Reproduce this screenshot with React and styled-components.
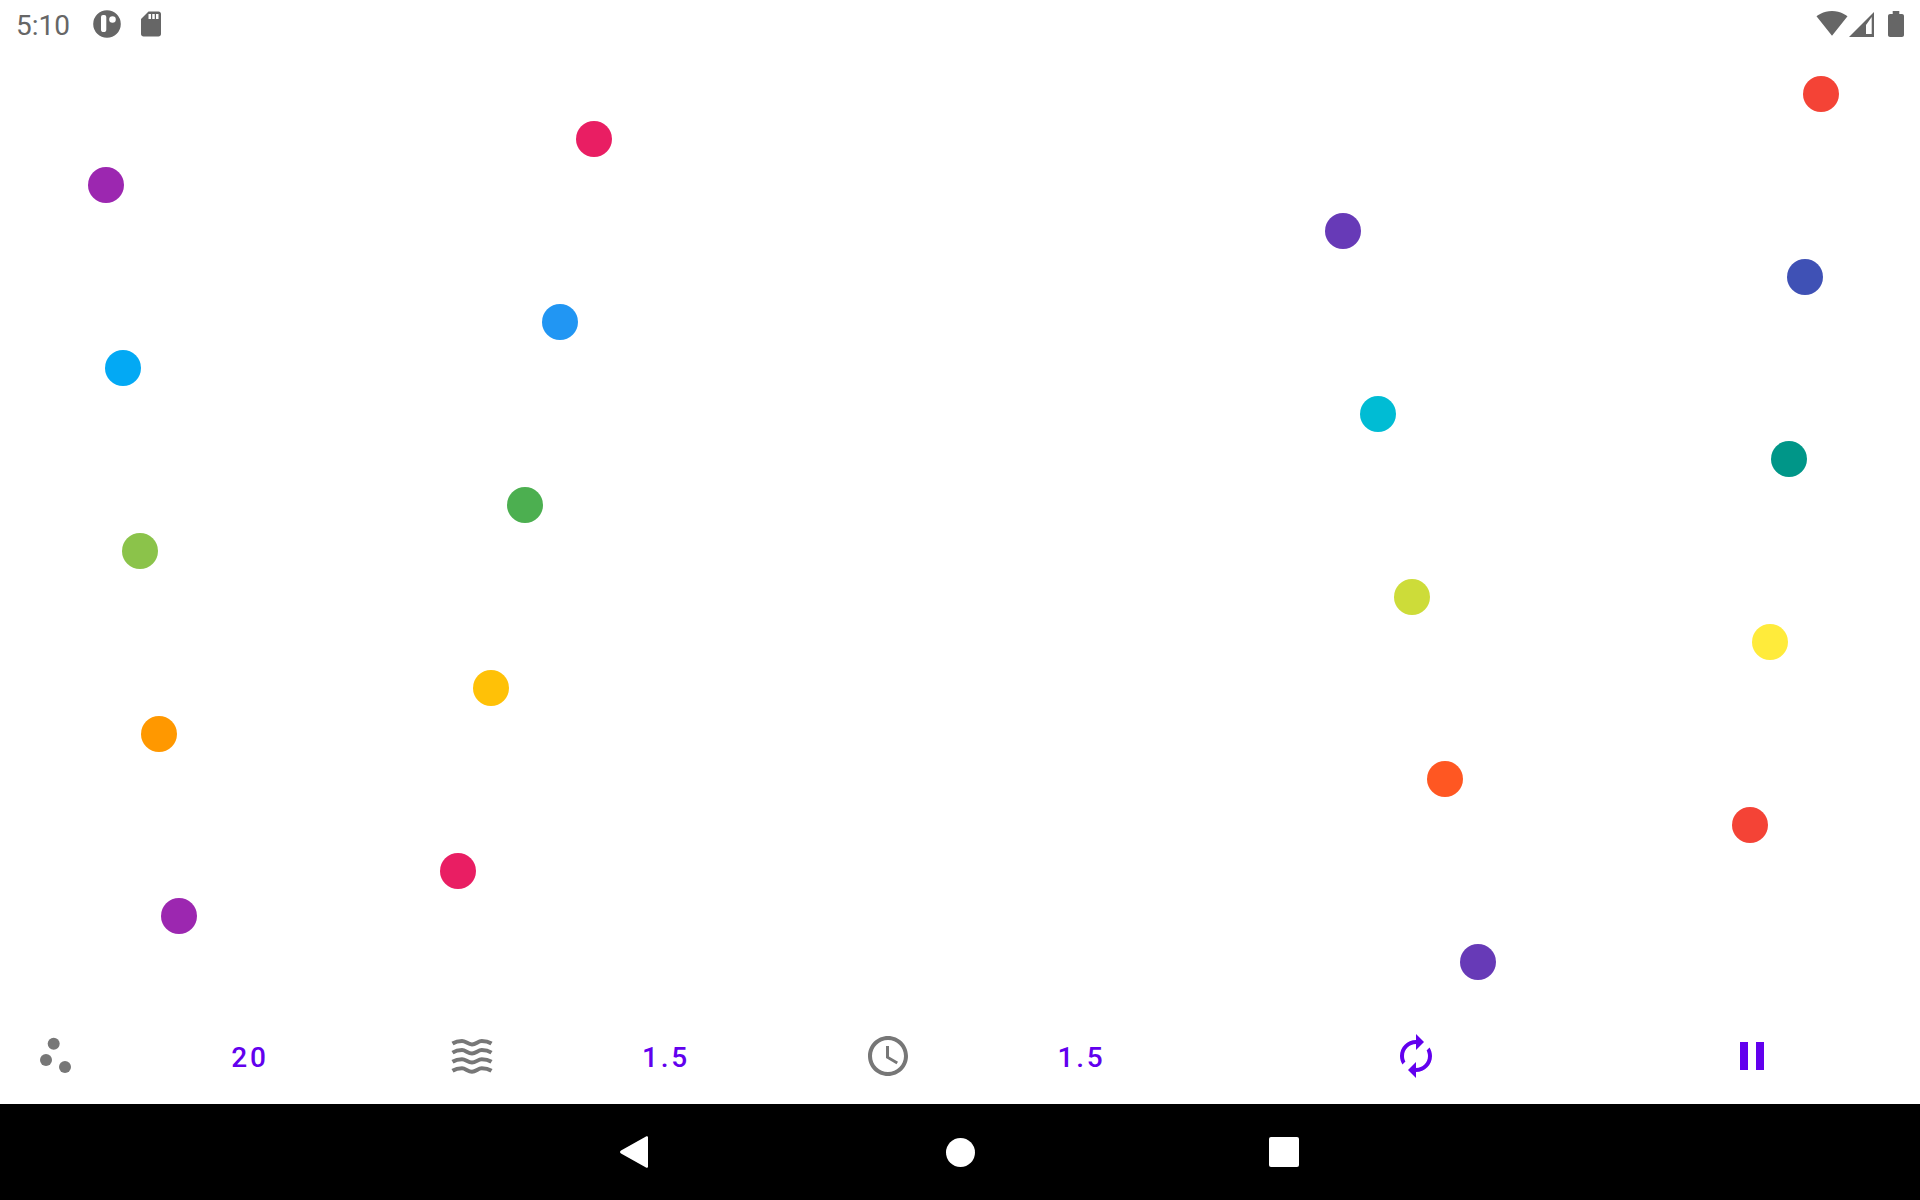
/**
 * @file Bouncing dots demo screen
 */

//  Modules
import React from 'react';
import styled, { createGlobalStyle } from 'styled-components';

const dots = [
  { x: 594, y: 139, color: '#E91E63' },
  { x: 106.3, y: 185, color: '#9C27B0' },
  { x: 1821, y: 93.5, color: '#F44336' },
  { x: 1343, y: 230.5, color: '#673AB7' },
  { x: 1805, y: 276.5, color: '#3F51B5' },
  { x: 559.5, y: 322, color: '#2196F3' },
  { x: 122.5, y: 367.5, color: '#03A9F4' },
  { x: 1377.5, y: 413.5, color: '#00BCD4' },
  { x: 1788.5, y: 459, color: '#009688' },
  { x: 524.5, y: 504.5, color: '#4CAF50' },
  { x: 140, y: 551, color: '#8BC34A' },
  { x: 1412, y: 596.5, color: '#CDDC39' },
  { x: 1770, y: 642, color: '#FFEB3B' },
  { x: 491, y: 688, color: '#FFC107' },
  { x: 159, y: 733.5, color: '#FF9800' },
  { x: 1445, y: 779, color: '#FF5722' },
  { x: 1750, y: 825, color: '#F44336' },
  { x: 458, y: 870.5, color: '#E91E63' },
  { x: 179, y: 916, color: '#9C27B0' },
  { x: 1478, y: 962, color: '#673AB7' },
];

const waveRows = [10.7, 19.8, 28.9, 38];

const GlobalStyle = createGlobalStyle`
  html, body {
    margin: 0;
    padding: 0;
    background: #fff;
  }
`;

const Screen = styled.div`
  width: 1920px;
  height: 1200px;
  display: flex;
  flex-direction: column;
  overflow: hidden;
  background: #fff;
  font-family: Roboto, "Liberation Sans", sans-serif;
`;

const StatusBar = styled.div`
  height: 48px;
  flex: none;
  display: flex;
  align-items: center;
  justify-content: space-between;
  padding: 0 16px;
  color: #666;
`;

const StatusGroup = styled.div`
  display: flex;
  align-items: center;
`;

const Clock = styled.span`
  padding-top: 3px;
  font-size: 28px;
  width: 76px;
`;

const StatusIcon = styled.svg`
  display: block;
  flex: none;
  fill: currentColor;
  margin-left: ${(p) => p.$gap || 0}px;
  margin-top: ${(p) => p.$drop || 0}px;
`;

const Canvas = styled.div`
  position: relative;
  flex: 1;
`;

const Dot = styled.div`
  position: absolute;
  left: ${(p) => p.$x - 18}px;
  top: ${(p) => p.$y - 66}px;
  width: 36px;
  height: 36px;
  border-radius: 50%;
  background: ${(p) => p.$color};
`;

const Toolbar = styled.div`
  height: 96px;
  flex: none;
  display: flex;
  align-items: center;
  padding-left: 19px;
`;

const Setting = styled.div`
  width: ${(p) => p.$width}px;
  display: grid;
  grid-template-columns: 72px ${(p) => p.$span}px;
  align-items: center;
`;

const IconCell = styled.div`
  height: 48px;
  display: flex;
  align-items: center;
  justify-content: center;
  color: ${(p) => (p.$active ? '#6200EE' : '#777')};
  margin-left: ${(p) => p.$offset || 0}px;
`;

const Value = styled.span`
  padding-top: 3px;
  text-align: center;
  font-size: 28px;
  font-weight: 500;
  letter-spacing: 2.8px;
  color: #6200EE;
`;

const ActionCell = styled(IconCell)`
  width: 72px;
`;

const NavBar = styled.div`
  height: 96px;
  flex: none;
  box-sizing: border-box;
  padding-right: 2px;
  background: #000;
  display: grid;
  grid-template-columns: 324px 326px 322px;
  justify-content: center;
  align-items: center;
  justify-items: center;
`;

const HomeButton = styled.div`
  width: 29px;
  height: 29px;
  border-radius: 50%;
  background: #fff;
`;

const RecentButton = styled.div`
  width: 30px;
  height: 30px;
  border-radius: 2px;
  background: #fff;
`;

const Icon = ({ d }) => (
  <svg width="48" height="48" viewBox="0 0 24 24" fill="currentColor">
    <path d={d} />
  </svg>
);

const ScatterIcon = () => (
  <svg width="48" height="48" viewBox="0 0 48 48" fill="currentColor">
    <circle cx="22.7" cy="11.7" r="6" />
    <circle cx="15" cy="28" r="6" />
    <circle cx="34" cy="35" r="6" />
  </svg>
);

const WavesIcon = () => (
  <svg width="48" height="48" viewBox="0 0 48 48" fill="none" stroke="currentColor" strokeWidth="4">
    {waveRows.map((y) => (
      <path
        key={y}
        d={`M4.500 ${y + 0.8}C7.500 ${y - 1} 10.500 ${y - 1.7} 14 ${y - 1.7}S20 ${y + 1.7} 24 ${y + 1.7}S30 ${y - 1.7} 33.750 ${y - 1.7}S40.500 ${y - 1} 43.500 ${y + 0.8}`}
      />
    ))}
  </svg>
);

export default function App() {
  return (
    <Screen>
      <GlobalStyle />
      <StatusBar>
        <StatusGroup>
          <Clock>5:10</Clock>
          <StatusIcon width="30" height="30" viewBox="0 0 30 30">
            <path
              fillRule="evenodd"
              d="M15 1.200a13.800 13.800 0 1 0 0 27.600 13.800 13.800 0 0 0 0-27.600zM9 8a2 2 0 0 1 2-2h1.300a2 2 0 0 1 2 2v12.400a2.650 2.650 0 0 1-5.300 0zM20.500 7.200a3.300 3.300 0 1 1 0 6.600 3.300 3.300 0 0 1 0-6.600z"
            />
          </StatusIcon>
          <StatusIcon $gap={14} width="30" height="30" viewBox="0 0 24 24">
            <path d="M18 2h-8L4.020 8 4 20c0 1.100.9 2 2 2h12c1.100 0 2-.9 2-2V4c0-1.100-.9-2-2-2zm-6 6h-2V4h2v4zm3 0h-2V4h2v4zm3 0h-2V4h2v4z" />
          </StatusIcon>
        </StatusGroup>
        <StatusGroup>
          <StatusIcon $drop={-2} width="32" height="32" viewBox="0 0 24 24">
            <path d="M12.010 21.490L23.640 7c-.45-.34-4.930-4-11.640-4C5.280 3 .81 6.660.36 7l11.640 14.490.01.01.01-.01z" />
          </StatusIcon>
          <StatusIcon $gap={1.5} $drop={2} width="26" height="26" viewBox="0 0 26 26">
            <path fillRule="evenodd" d="M0 25L25 0v25zM17 13v9h5.700V5z" />
          </StatusIcon>
          <StatusIcon $gap={13} width="16" height="26" viewBox="0 0 16 26">
            <path d="M14 3h-2.700V0H4.700v3H2C.9 3 0 3.900 0 5v19c0 1.100.9 2 2 2h12c1.100 0 2-.9 2-2V5c0-1.100-.9-2-2-2z" />
          </StatusIcon>
        </StatusGroup>
      </StatusBar>

      <Canvas>
        {dots.map((dot) => (
          <Dot key={`${dot.x}-${dot.y}`} $x={dot.x} $y={dot.y} $color={dot.color} />
        ))}
      </Canvas>

      <Toolbar>
        <Setting $width={417} $span={318}>
          <IconCell><ScatterIcon /></IconCell>
          <Value>20</Value>
        </Setting>
        <Setting $width={416} $span={316}>
          <IconCell><WavesIcon /></IconCell>
          <Value>1.5</Value>
        </Setting>
        <Setting $width={417} $span={315}>
          <IconCell>
            <Icon d="M11.990 2C6.470 2 2 6.480 2 12s4.470 10 9.990 10C17.520 22 22 17.520 22 12S17.520 2 11.990 2zM12 20c-4.420 0-8-3.580-8-8s3.580-8 8-8 8 3.580 8 8-3.580 8-8 8zM12.500 7H11v6l5.250 3.150.75-1.230-4.500-2.670z" />
          </IconCell>
          <Value>1.5</Value>
        </Setting>
        <ActionCell $active $offset={111}>
          <Icon d="M12 6v3l4-4-4-4v3c-4.420 0-8 3.580-8 8 0 1.570.46 3.030 1.240 4.260L6.700 14.800c-.45-.83-.7-1.790-.7-2.800 0-3.310 2.690-6 6-6zm6.760 1.740L17.300 9.200c.44.84.7 1.790.7 2.800 0 3.310-2.690 6-6 6v-3l-4 4 4 4v-3c4.420 0 8-3.580 8-8 0-1.570-.46-3.030-1.240-4.260z" />
        </ActionCell>
        <ActionCell $active $offset={264}>
          <Icon d="M6 19h4V5H6v14zm8-14v14h4V5h-4z" />
        </ActionCell>
      </Toolbar>

      <NavBar>
        <svg width="32" height="36" viewBox="0 0 32 36" fill="#fff">
          <path d="M29 3.600v28.800c0 1.200-1.100 1.700-2 1L2 19.400c-1.300-.8-1.300-2 0-2.800L27 2.600c.9-.7 2-.2 2 1z" />
        </svg>
        <HomeButton />
        <RecentButton />
      </NavBar>
    </Screen>
  );
}
